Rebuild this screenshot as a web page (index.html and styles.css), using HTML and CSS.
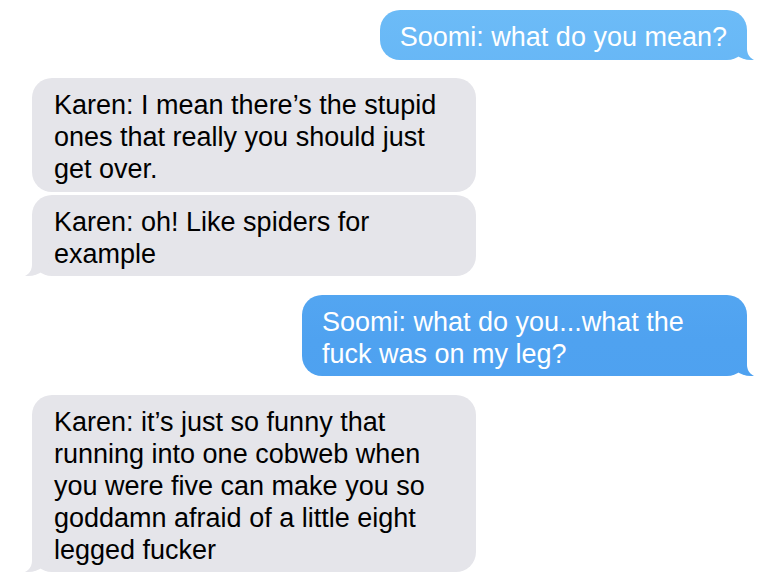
FILE: index.html
```html
<!DOCTYPE html>
<html lang="en">
<head>
<meta charset="utf-8">
<title>Messages</title>
<link rel="stylesheet" href="styles.css">
</head>
<body>
<div class="thread">
  <div class="msg sent tail">Soomi: what do you mean?</div>
  <div class="msg recv group-start">Karen: I mean there’s the stupid ones that really you should just get over.</div>
  <div class="msg recv tail">Karen: oh! Like spiders for example</div>
  <div class="msg sent tail group-start">Soomi: what do you...what the fuck was on my leg?</div>
  <div class="msg recv tail group-start">Karen: it’s just so funny that running into one cobweb when you were five can make you so goddamn afraid of a little eight legged fucker</div>
</div>
</body>
</html>
```
FILE: styles.css
```css
html, body {
  margin: 0;
  padding: 0;
  background: #ffffff;
}

.thread {
  display: flex;
  flex-direction: column;
  padding: 10px 25px 0 32px;
  font-family: "Liberation Sans", Arial, sans-serif;
  font-size: 27px;
  line-height: 32px;
}

.msg {
  position: relative;
  box-sizing: border-box;
  padding: 11px 20px 6.5px 22px;
  border-radius: 20px;
  margin-top: 3px;
}

.group-start {
  margin-top: 18.5px;
}

.thread > .msg:first-child {
  margin-top: 0;
}

.sent {
  align-self: flex-end;
  max-width: 445px;
  padding-left: 20px;
  color: #ffffff;
  background: linear-gradient(to bottom, #6dbcf7 0px, #4fa2f0 340px, #4a9ef0 584px) fixed;
}

.recv {
  align-self: flex-start;
  width: 444px;
  color: #000000;
  background: #e5e5ea;
}

.tail::before,
.tail::after {
  content: "";
  position: absolute;
  bottom: 0;
  height: 26px;
}

.sent.tail::before {
  right: -8px;
  width: 26px;
  background: inherit;
  border-bottom-left-radius: 22px 20px;
}

.sent.tail::after {
  right: -14px;
  width: 14px;
  bottom: -1px;
  height: 28px;
  background: #ffffff;
  border-bottom-left-radius: 12px;
}

.recv.tail::before {
  left: -8px;
  width: 26px;
  background: #e5e5ea;
  border-bottom-right-radius: 22px 20px;
}

.recv.tail::after {
  left: -14px;
  width: 14px;
  bottom: -1px;
  height: 28px;
  background: #ffffff;
  border-bottom-right-radius: 12px;
}
```
